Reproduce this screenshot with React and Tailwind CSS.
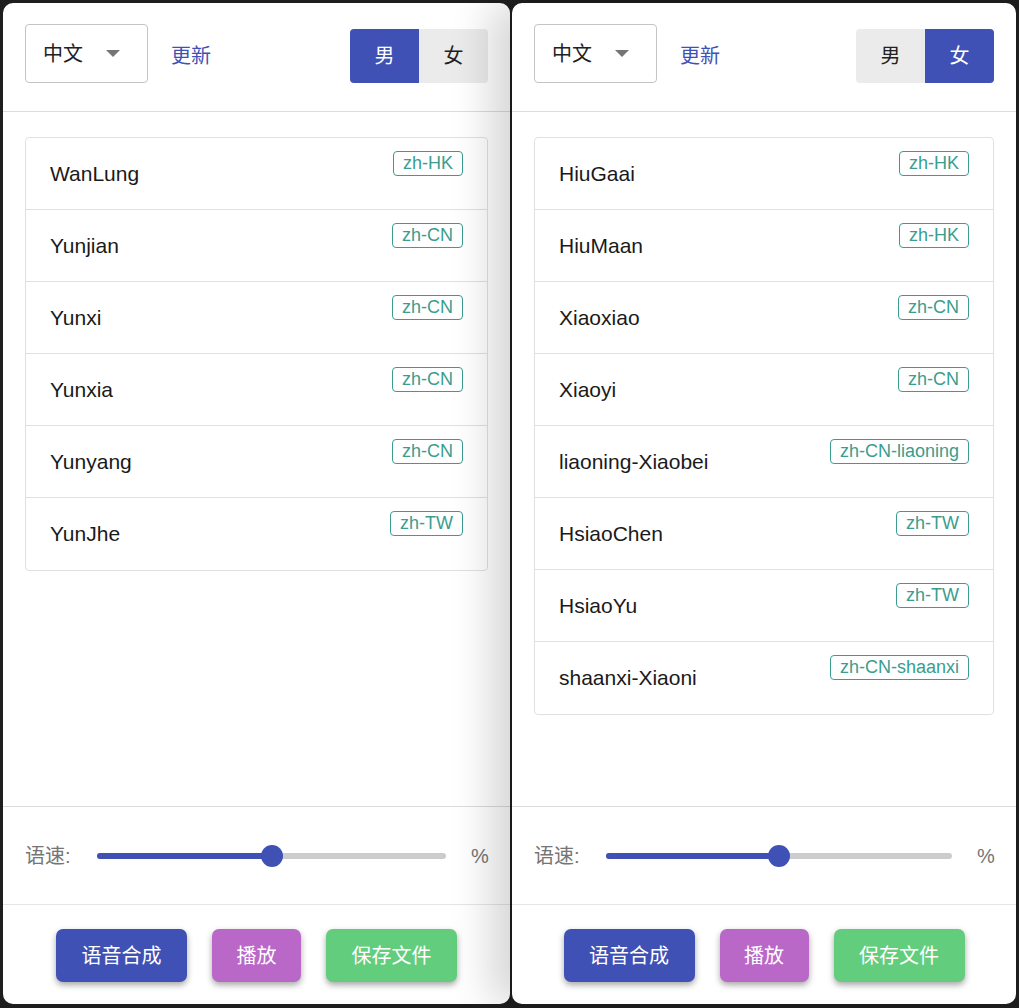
import React from "react";

const male = [
  { name: "WanLung", tag: "zh-HK" },
  { name: "Yunjian", tag: "zh-CN" },
  { name: "Yunxi", tag: "zh-CN" },
  { name: "Yunxia", tag: "zh-CN" },
  { name: "Yunyang", tag: "zh-CN" },
  { name: "YunJhe", tag: "zh-TW" },
];

const female = [
  { name: "HiuGaai", tag: "zh-HK" },
  { name: "HiuMaan", tag: "zh-HK" },
  { name: "Xiaoxiao", tag: "zh-CN" },
  { name: "Xiaoyi", tag: "zh-CN" },
  { name: "liaoning-Xiaobei", tag: "zh-CN-liaoning" },
  { name: "HsiaoChen", tag: "zh-TW" },
  { name: "HsiaoYu", tag: "zh-TW" },
  { name: "shaanxi-Xiaoni", tag: "zh-CN-shaanxi" },
];

const Panel = ({ voices, gender, className }) => {
  return (
    <div className={"flex flex-col h-[1001px] bg-white rounded-[10px] overflow-hidden " + className}>
      {/* en-tete : langue, mise a jour, genre */}
      <div className="flex items-start h-[108px] px-[22px] pt-[21px] shrink-0">
        <div className="w-[123px] h-[59px] border border-[#c4c4c4] rounded-[4px] flex items-center pl-[17px]">
          <span className="text-[20px] text-[#212121]">中文</span>
          <span className="ml-auto mr-[27px] w-0 h-0 border-l-[7px] border-r-[7px] border-t-[7px] border-l-transparent border-r-transparent border-t-[#757575]" />
        </div>
        <div className="ml-[23px] h-[59px] mt-[2px] flex items-center text-[20px] text-[#3f51b5]">更新</div>
        <div className="ml-auto mt-[5px] h-[54px] flex rounded-[4px] overflow-hidden">
          <div className={"w-[69px] flex items-center justify-center text-[20px] " + (gender === "m" ? "bg-[#3f51b5] text-white" : "bg-[#ebebeb] text-[#212121]")}>男</div>
          <div className={"w-[69px] flex items-center justify-center text-[20px] " + (gender === "f" ? "bg-[#3f51b5] text-white" : "bg-[#ebebeb] text-[#212121]")}>女</div>
        </div>
      </div>
      <div className="h-px bg-[#dcdcdc] shrink-0" />

      {/* liste des voix */}
      <div className="flex-1 px-[22px] pt-[25px]">
        <div className="border border-[#e0e0e0] rounded-[4px]">
          {voices.map((v, i) => (
            <div
              key={v.name}
              className={"relative h-[72px] flex items-center pl-[24px] " + (i < voices.length - 1 ? "border-b border-[#e0e0e0]" : "h-[71px]")}
            >
              <span className="text-[21px] text-[#1a1a1a]">{v.name}</span>
              <span className="absolute top-[13px] right-[24px] h-[25px] px-[9px] flex items-center border border-[#3a9d8f] rounded-[4px] text-[18px] text-[#3a9d8f]">
                {v.tag}
              </span>
            </div>
          ))}
        </div>
      </div>

      <div className="h-px bg-[#dcdcdc] shrink-0" />
      {/* vitesse */}
      <div className="h-[97px] shrink-0 flex items-center px-[22px]">
        <span className="w-[72px] text-[20px] text-[#757575]">语速:</span>
        <div className="flex-1 relative h-[6px] rounded-full bg-[#cccccc]">
          <div className="w-1/2 h-full rounded-full bg-[#3f51b5]" />
          <div className="absolute left-1/2 top-1/2 -translate-x-1/2 -translate-y-1/2 w-[22px] h-[22px] rounded-full bg-[#3f51b5]" />
        </div>
        <span className="ml-[25px] w-[17px] text-[20px] text-[#757575]">%</span>
      </div>
      <div className="h-px bg-[#e6e6e6] shrink-0" />

      {/* actions */}
      <div className="flex-1 max-h-[99px] flex items-center justify-center gap-[25px]">
        <button className="w-[131px] h-[53px] mt-[2px] rounded-[7px] bg-[#3f51b5] text-white text-[20px] shadow-[0_3px_6px_rgba(0,0,0,0.35)]">语音合成</button>
        <button className="w-[89px] h-[53px] mt-[2px] rounded-[7px] bg-[#ba68c8] text-white text-[20px] shadow-[0_3px_6px_rgba(0,0,0,0.35)]">播放</button>
        <button className="w-[131px] h-[53px] mt-[2px] rounded-[7px] bg-[#63cd7e] text-white text-[20px] shadow-[0_3px_6px_rgba(0,0,0,0.35)]">保存文件</button>
      </div>
    </div>
  );
};

export default function App() {
  return (
    <div className="w-[1019px] h-[1008px] overflow-hidden bg-[#1e1e1e] flex items-start pt-[3px] pl-[3px] gap-[2px] font-['Liberation_Sans','Noto_Sans_CJK_SC',sans-serif]">
      <Panel voices={male} gender="m" className="w-[507px]" />
      <Panel
        voices={female}
        gender="f"
        className="w-[504px] relative z-10 shadow-[-22px_0_40px_rgba(0,0,0,0.16)]"
      />
    </div>
  );
}
